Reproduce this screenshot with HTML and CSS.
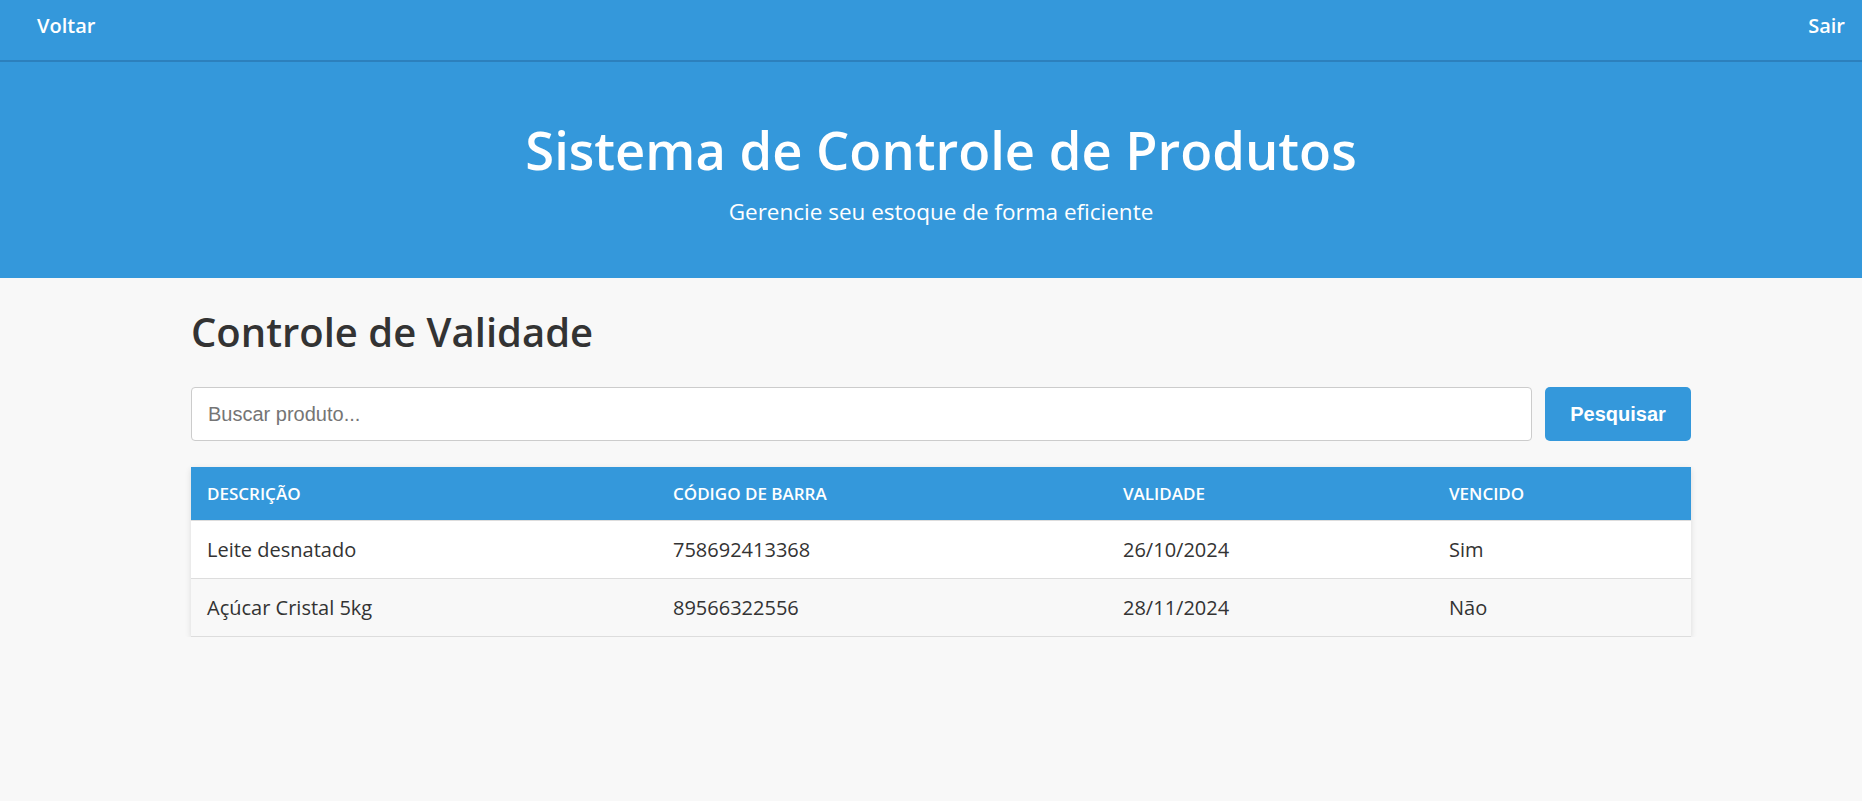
FILE: index.html
```html
<!DOCTYPE html>
<html lang="pt-BR">
<head>
<meta charset="utf-8">
<title>Controle de Validade</title>
<link rel="stylesheet" href="styles.css">
</head>
<body>
<nav class="topnav">
  <a class="nav-link" href="#">Voltar</a>
  <a class="nav-link" href="#">Sair</a>
</nav>
<header class="hero">
  <h1 class="hero-title">Sistema de Controle de Produtos</h1>
  <p class="hero-sub">Gerencie seu estoque de forma eficiente</p>
</header>
<main class="container">
  <h2 class="page-title">Controle de Validade</h2>
  <form class="search-row">
    <input class="search-input" type="text" placeholder="Buscar produto...">
    <button class="search-btn" type="button">Pesquisar</button>
  </form>
  <table class="data-table">
    <colgroup>
      <col class="col-desc">
      <col class="col-code">
      <col class="col-date">
      <col class="col-exp">
    </colgroup>
    <thead>
      <tr>
        <th>Descrição</th>
        <th>Código de Barra</th>
        <th>Validade</th>
        <th>Vencido</th>
      </tr>
    </thead>
    <tbody>
      <tr>
        <td>Leite desnatado</td>
        <td>758692413368</td>
        <td>26/10/2024</td>
        <td>Sim</td>
      </tr>
      <tr>
        <td>Açúcar Cristal 5kg</td>
        <td>89566322556</td>
        <td>28/11/2024</td>
        <td>Não</td>
      </tr>
    </tbody>
  </table>
</main>
</body>
</html>
```

FILE: styles.css
```css
* {
  box-sizing: border-box;
}

body {
  margin: 0;
  background: #f8f8f8;
  font-family: "Open Sans", "Noto Sans", sans-serif;
  color: #333;
}

.topnav {
  height: 62px;
  background: #3498db;
  border-bottom: 2px solid #2c80bd;
  display: flex;
  justify-content: space-between;
  align-items: flex-start;
  padding: 12px 17px 0 37px;
}

.nav-link {
  color: #fff;
  text-decoration: none;
  font-size: 20px;
  font-weight: 600;
  line-height: 27px;
}

.hero {
  background: #3498db;
  color: #fff;
  text-align: center;
  padding: 56px 0 51px 20px;
}

.hero-title {
  margin: 0;
  font-size: 52.5px;
  font-weight: 600;
  line-height: 63px;
}

.hero-sub {
  margin: 15px 0 0;
  font-size: 22.5px;
  line-height: 31px;
}

.container {
  width: 1500px;
  margin: 0 161px 0 191px;
}

.page-title {
  margin: 30px 0 31px;
  font-size: 40px;
  font-weight: 600;
  line-height: 48px;
  color: #333;
}

.search-row {
  display: flex;
  gap: 13px;
  height: 54px;
  margin: 0;
}

.search-input {
  flex: 1;
  height: 54px;
  border: 1px solid #ccc;
  border-radius: 4px;
  padding: 0 16px;
  font-family: "Liberation Sans", Arial, sans-serif;
  font-size: 20px;
  color: #333;
  background: #fff;
}

.search-input::placeholder {
  color: #757575;
}

.search-btn {
  width: 146px;
  height: 54px;
  border: none;
  border-radius: 5px;
  background: #3498db;
  color: #fff;
  font-family: "Liberation Sans", Arial, sans-serif;
  font-size: 20px;
  font-weight: 700;
}

.data-table {
  width: 100%;
  margin-top: 26px;
  border-collapse: collapse;
  table-layout: fixed;
  background: #fff;
  box-shadow: 0 2px 6px rgba(0, 0, 0, 0.12);
}

.col-desc { width: 466px; }
.col-code { width: 450px; }
.col-date { width: 326px; }
.col-exp { width: 258px; }

.data-table th {
  background: #3498db;
  color: #fff;
  text-align: left;
  text-transform: uppercase;
  font-size: 17px;
  font-weight: 600;
  line-height: 24px;
  padding: 15px 16px 14px;
  border-bottom: 1px solid #ddd;
}

.data-table td {
  font-size: 20px;
  line-height: 27px;
  padding: 15px 16px;
  border-bottom: 1px solid #ddd;
  color: #333;
}

.data-table tbody tr:nth-child(even) {
  background: #f8f8f8;
}
```
